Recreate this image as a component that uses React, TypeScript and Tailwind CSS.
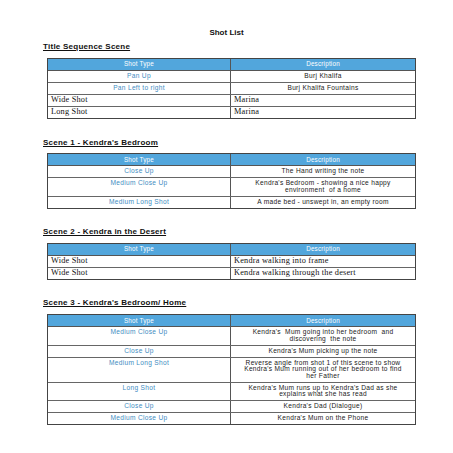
import React from "react";

type Row = { type: string; desc: React.ReactNode; serif?: boolean };

const Header = () => (
  <div className="flex bg-[#52a6dc] border-b border-[#555] text-white text-[6.3px] leading-[6px] h-[12px] tracking-[0.2px]">
    <div className="w-[183px] border-r border-[#555] flex items-center justify-center">Shot Type</div>
    <div className="flex-1 flex items-center justify-center">Description</div>
  </div>
);

const Table = ({ rows }: { rows: Row[] }) => (
  <div className="ml-[47px] w-[369px] border border-[#444]">
    <Header />
    {rows.map((r, i) => (
      <div key={i} className={`flex ${i < rows.length - 1 ? "border-b border-[#666]" : ""}`}>
        {r.serif ? (
          <>
            <div className="w-[183px] border-r border-[#555] pl-[3px] h-[11px] flex items-center text-[8.3px] text-[#111] tracking-[0.2px]" style={{ fontFamily: '"Liberation Serif", serif' }}>
              {r.type}
            </div>
            <div className="flex-1 pl-[3px] h-[11px] flex items-center text-[8.3px] text-[#111] tracking-[0.2px]" style={{ fontFamily: '"Liberation Serif", serif' }}>
              {r.desc}
            </div>
          </>
        ) : (
          <>
            <div className="w-[183px] border-r border-[#555] pt-[2.3px] pb-[2.2px] text-center text-[6.6px] leading-[6.5px] text-[#3f8dc2] tracking-[0.3px]">
              {r.type}
            </div>
            <div className="flex-1 pt-[2.3px] pb-[2.2px] text-center text-[6.6px] leading-[6.5px] text-[#1a1a1a] tracking-[0.3px]">
              {r.desc}
            </div>
          </>
        )}
      </div>
    ))}
  </div>
);

const Heading = ({ children, className }: { children: React.ReactNode; className: string }) => (
  <div className={`ml-[43px] text-[8px] leading-[10px] font-bold underline underline-offset-[1px] text-[#111] tracking-[0.25px] ${className}`}>
    {children}
  </div>
);

export default function App() {
  return (
    <div className="w-[453px] h-[453px] bg-white overflow-hidden" style={{ fontFamily: '"Liberation Sans", Arial, sans-serif' }}>
      <div className="pt-[28px] text-center text-[8px] leading-[10px] font-bold text-[#111]">Shot List</div>
      <Heading className="mt-[4px]">Title Sequence Scene</Heading>
      <div className="mt-[5.7px]">
        <Table
          rows={[
            { type: "Pan Up", desc: "Burj Khalifa" },
            { type: "Pan Left to right", desc: "Burj Khalifa  Fountains" },
            { type: "Wide Shot", desc: "Marina", serif: true },
            { type: "Long Shot", desc: "Marina", serif: true },
          ]}
        />
      </div>
      <Heading className="mt-[19.4px]">Scene 1 - Kendra's Bedroom</Heading>
      <div className="mt-[5px]">
        <Table
          rows={[
            { type: "Close Up", desc: "The Hand writing the note" },
            {
              type: "Medium Close Up",
              desc: (
                <>
                  Kendra's Bedroom - showing a nice happy
                  <br />
                  environment &nbsp;of a home
                </>
              ),
            },
            { type: "Medium Long Shot", desc: "A made bed - unswept in, an empty room" },
          ]}
        />
      </div>
      <Heading className="mt-[18.6px]">Scene 2 - Kendra in the Desert</Heading>
      <div className="mt-[5.7px]">
        <Table
          rows={[
            { type: "Wide Shot", desc: "Kendra walking  into  frame", serif: true },
            { type: "Wide Shot", desc: "Kendra walking  through  the  desert", serif: true },
          ]}
        />
      </div>
      <Heading className="mt-[18.3px]">Scene 3 - Kendra's Bedroom/ Home</Heading>
      <div className="mt-[6px]">
        <Table
          rows={[
            {
              type: "Medium Close Up",
              desc: (
                <>
                  Kendra's &nbsp;Mum going into her bedroom &nbsp;and
                  <br />
                  discovering &nbsp;the note
                </>
              ),
            },
            { type: "Close Up", desc: "Kendra's  Mum picking up the note" },
            {
              type: "Medium Long Shot",
              desc: (
                <>
                  Reverse angle from shot 1 of this scene to show
                  <br />
                  Kendra's Mum running out of her bedroom to find
                  <br />
                  her Father
                </>
              ),
            },
            {
              type: "Long Shot",
              desc: (
                <>
                  Kendra's Mum runs up to Kendra's Dad as she
                  <br />
                  explains what she has read
                </>
              ),
            },
            { type: "Close Up", desc: "Kendra's Dad (Dialogue)" },
            { type: "Medium Close Up", desc: "Kendra's Mum on the Phone" },
          ]}
        />
      </div>
    </div>
  );
}
